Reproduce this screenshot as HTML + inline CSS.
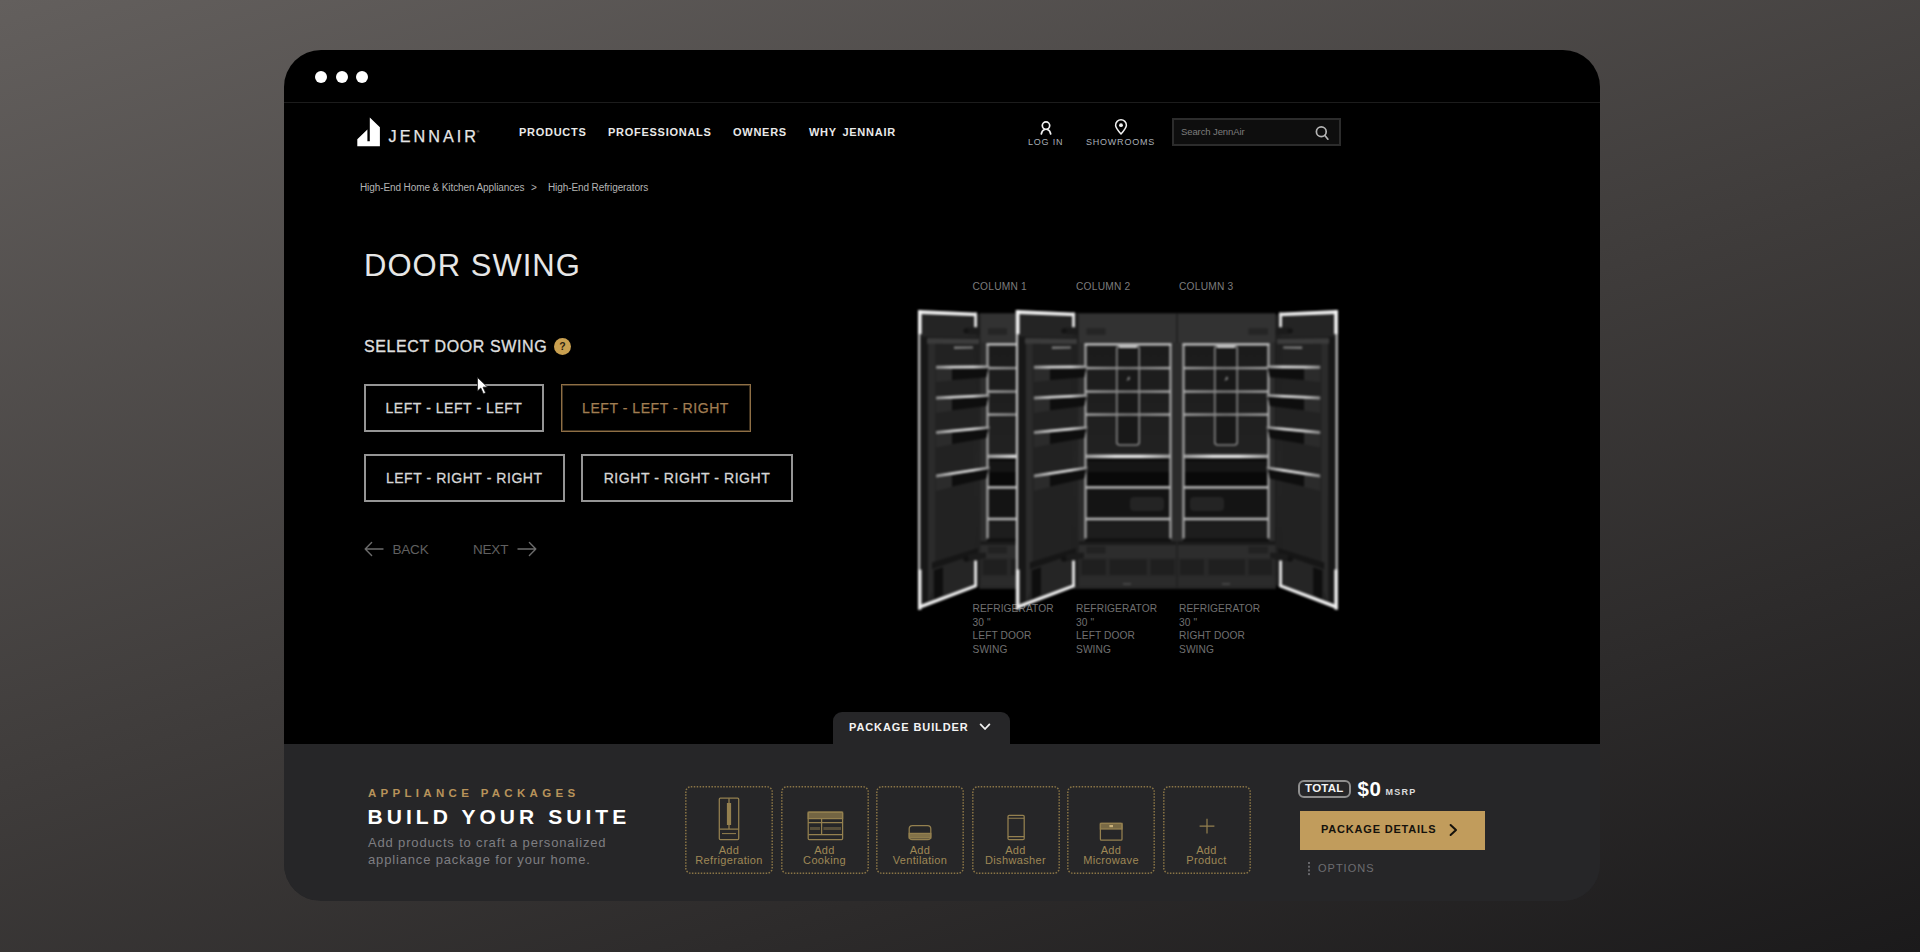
<!DOCTYPE html>
<html lang="en">
<head>
<meta charset="utf-8">
<title>JennAir - Door Swing</title>
<style>
*{margin:0;padding:0;box-sizing:border-box}
html,body{width:1920px;height:952px;overflow:hidden}
body{position:relative;font-family:"Liberation Sans",sans-serif;background:linear-gradient(162deg,#635f5d 0%,#3f3c3b 50%,#1b1a1b 100%);color:#fff}
.abs{position:absolute;white-space:nowrap;line-height:1}
#win{position:absolute;left:284px;top:50px;width:1316px;height:850.5px;background:linear-gradient(#000 0,#000 694px,#262628 694px);border-radius:37px;overflow:hidden}
#win .in{position:absolute;left:-284px;top:-50px;width:1920px;height:952px}
.dot{position:absolute;top:70.7px;width:12px;height:12px;border-radius:50%;background:#fff}
#topline{position:absolute;left:284px;top:102px;width:1316px;height:1px;background:#1c1c1c}
.nav{font-weight:700;font-size:11px;letter-spacing:.73px;word-spacing:2px;color:#e9e9e9;top:127px}
.util{font-size:9px;color:#a9afb7;letter-spacing:.78px;top:138px}
.crumb{font-size:10px;color:#b4b4b4;top:182.5px;letter-spacing:-.1px}
#search{position:absolute;left:1172px;top:118px;width:169px;height:28px;border:2px solid #2c2c2c;background:#0e0e0e}
h1.abs{font-weight:400;font-size:31px;letter-spacing:1.02px;color:#e6e6e6;left:364px;top:250.2px}
.sel{font-size:16px;letter-spacing:.6px;color:#dedede;left:364px;top:339px;-webkit-text-stroke:.35px #dedede}
.btn{position:absolute;height:48px;border:2px solid #959595;color:#d6d6d6;-webkit-text-stroke:.3px #d6d6d6;font-size:14px;letter-spacing:.55px;text-align:center;line-height:44px;white-space:nowrap}
.btn.gold{border:1px solid #8f6f45;box-shadow:inset 0 0 0 1px rgba(143,111,69,.45);color:#a07d52;-webkit-text-stroke:.25px #a07d52;line-height:46px}
.step{font-size:13.5px;color:#606060;top:543px;letter-spacing:-.2px}
.col{font-size:10.2px;letter-spacing:.23px;color:#7c7c7c;top:281.5px}
.fl{font-size:10.2px;line-height:13.5px;letter-spacing:.1px;color:#707070;top:602.3px}
#panel{position:absolute;left:284px;top:744px;width:1316px;height:156px;background:#262628}
#tab{position:absolute;left:832.5px;top:711.5px;width:177.5px;height:34px;background:#262628;border-radius:9px 9px 0 0}
.box{position:absolute;top:786px;width:88px;height:88px;border:2px solid transparent}
.box .lb{position:absolute;left:-4px;right:-4px;top:57px;text-align:center;font-size:11px;line-height:10.2px;color:#9f8856;letter-spacing:.35px}
</style>
</head>
<body>
<div id="win"><div class="in">

<!-- title bar -->
<div class="dot" style="left:315.3px"></div>
<div class="dot" style="left:335.8px"></div>
<div class="dot" style="left:356.3px"></div>
<div id="topline"></div>

<!-- logo -->
<svg class="abs" style="left:356px;top:116px" width="26" height="32" viewBox="356 116 26 32">
  <path d="M357.3 146.2 V139.2 L367.4 129.4 V141.2 H369.8 V117.6 L379.9 127.2 V146.2 Z" fill="#fff"/>
</svg>
<div class="abs" id="brand" style="left:388.5px;top:128.2px;font-size:16.2px;letter-spacing:3.05px;color:#e6e6e6;-webkit-text-stroke:.25px #e6e6e6">JENNAIR</div>
<div class="abs" style="left:476.5px;top:129.5px;font-size:4px;color:#bbb">®</div>

<!-- nav -->
<div class="abs nav" style="left:519px">PRODUCTS</div>
<div class="abs nav" style="left:608px">PROFESSIONALS</div>
<div class="abs nav" style="left:733px">OWNERS</div>
<div class="abs nav" style="left:809px">WHY JENNAIR</div>

<div class="abs util" id="login" style="left:1028px">LOG IN</div>
<div class="abs util" id="show" style="left:1086px">SHOWROOMS</div>
<div id="search"></div>
<!-- login icon -->
<svg class="abs" style="left:1037.8px;top:119.6px" width="16" height="16" viewBox="0 0 16 16" fill="none" stroke="#f0f0f0" stroke-width="1.7" stroke-linecap="round">
  <circle cx="8" cy="5.6" r="3.7"/>
  <path d="M3.3 14 C3.8 11.4 5.2 10 6.6 9.5 M12.7 14 C12.2 11.4 10.8 10 9.4 9.5"/>
</svg>
<!-- pin icon -->
<svg class="abs" style="left:1111.6px;top:118.4px" width="18" height="18" viewBox="0 0 18 18" fill="none" stroke="#f0f0f0" stroke-width="1.5" stroke-linejoin="round">
  <path d="M9 16 C5.2 11.6 3.6 9.5 3.6 7.2 A5.4 5.4 0 0 1 14.4 7.2 C14.4 9.5 12.8 11.6 9 16 Z"/>
  <circle cx="9" cy="7.2" r="1.9" fill="#f0f0f0" stroke="none"/>
</svg>
<!-- search icon -->
<svg class="abs" style="left:1313px;top:125px" width="18" height="18" viewBox="0 0 18 18" fill="none" stroke="#b4b4b4" stroke-width="1.7" stroke-linecap="round">
  <circle cx="8.3" cy="6.8" r="4.9"/>
  <path d="M11.9 10.5 L14.9 14.2"/>
</svg>

<div class="abs" id="stext" style="left:1181px;top:127.1px;font-size:9.5px;color:#7d7d7d;letter-spacing:-.1px">Search JennAir</div>

<!-- breadcrumb -->
<div class="abs crumb" id="c1" style="left:360px">High-End Home &amp; Kitchen Appliances</div>
<div class="abs crumb" style="left:531px">&gt;</div>
<div class="abs crumb" id="c2" style="left:548px">High-End Refrigerators</div>

<h1 class="abs" id="h1">DOOR SWING</h1>
<div class="abs sel" id="sel">SELECT DOOR SWING</div>
<div class="abs" style="left:554px;top:337.5px;width:17px;height:17px;border-radius:50%;background:#c9a050;color:#2a2010;font-size:10.5px;font-weight:700;text-align:center;line-height:17px">?</div>


<div class="btn" style="left:364px;top:384px;width:180px">LEFT - LEFT - LEFT</div>
<div class="btn gold" style="left:560.5px;top:384px;width:190px">LEFT - LEFT - RIGHT</div>
<div class="btn" style="left:364px;top:454px;width:200.5px">LEFT - RIGHT - RIGHT</div>
<div class="btn" style="left:581px;top:454px;width:212px">RIGHT - RIGHT - RIGHT</div>

<div class="abs step" id="back" style="left:392.5px">BACK</div>
<div class="abs step" id="next" style="left:473px">NEXT</div>


<svg class="abs" style="left:363px;top:540px" width="22" height="18" viewBox="0 0 22 18" fill="none" stroke="#6c6c6c" stroke-width="1.4" stroke-linecap="round" stroke-linejoin="round"><path d="M20 9 H2.2 M8.6 2.6 L2.2 9 L8.6 15.4"/></svg>
<svg class="abs" style="left:516px;top:540px" width="22" height="18" viewBox="0 0 22 18" fill="none" stroke="#6c6c6c" stroke-width="1.4" stroke-linecap="round" stroke-linejoin="round"><path d="M2 9 H19.8 M13.4 2.6 L19.8 9 L13.4 15.4"/></svg>
<!-- cursor -->
<svg class="abs" style="left:476px;top:376px" width="14" height="20" viewBox="0 0 14 20"><path d="M1.5 1.5 L1.5 15 L4.8 12 L7.4 17.8 L9.6 16.8 L7 11.2 L11.4 11 Z" fill="#fff" stroke="#222" stroke-width=".8" stroke-linejoin="round"/></svg>


<!-- fridge labels -->
<div class="abs col" style="left:972.5px">COLUMN 1</div>
<div class="abs col" style="left:1076px">COLUMN 2</div>
<div class="abs col" style="left:1179px">COLUMN 3</div>
<div class="abs fl" style="left:972.5px">REFRIGERATOR<br>30 "<br>LEFT DOOR<br>SWING</div>
<div class="abs fl" style="left:1076px">REFRIGERATOR<br>30 "<br>LEFT DOOR<br>SWING</div>
<div class="abs fl" style="left:1179px">REFRIGERATOR<br>30 "<br>RIGHT DOOR<br>SWING</div>
<!--FRIDGE-START-->
<svg class="abs" style="left:900px;top:296px;filter:blur(.85px)" width="460" height="330" viewBox="900 296 460 330">
<defs>
<linearGradient id="rail" x1="0" y1="0" x2="0" y2="1"><stop offset="0" stop-color="#e9e9e9"/><stop offset=".55" stop-color="#b9b9b9"/><stop offset="1" stop-color="#6a6a6a"/></linearGradient>
<linearGradient id="railh" x1="0" y1="0" x2="1" y2="0"><stop offset="0" stop-color="#8a8a8a"/><stop offset=".3" stop-color="#e0e0e0"/><stop offset=".7" stop-color="#cfcfcf"/><stop offset="1" stop-color="#8a8a8a"/></linearGradient>
<linearGradient id="shelf" x1="0" y1="0" x2="1" y2="0"><stop offset="0" stop-color="#a8a8a8"/><stop offset=".5" stop-color="#7d7d7d"/><stop offset="1" stop-color="#a8a8a8"/></linearGradient>
<linearGradient id="bshelf" x1="0" y1="0" x2="1" y2="0"><stop offset="0" stop-color="#9a9a9a"/><stop offset=".35" stop-color="#e6e6e6"/><stop offset=".65" stop-color="#e6e6e6"/><stop offset="1" stop-color="#9a9a9a"/></linearGradient>
<linearGradient id="upper" x1="0" y1="0" x2="0" y2="1"><stop offset="0" stop-color="#1b1b1b"/><stop offset="1" stop-color="#222"/></linearGradient>
<linearGradient id="doorg" x1="0" y1="0" x2="0" y2="1"><stop offset="0" stop-color="#1f1f1f"/><stop offset=".5" stop-color="#242424"/><stop offset="1" stop-color="#1f1f1f"/></linearGradient>
</defs>
<rect x="979.5" y="313.5" width="296.0" height="275" fill="#2c2c2c"/>
<rect x="979.5" y="313.5" width="296.0" height="29" fill="#323232"/>
<rect x="979.5" y="541" width="296.0" height="47.5" fill="#292929"/>
<rect x="979.5" y="541" width="296.0" height="4" fill="#1b1b1b"/>
<rect x="979.5" y="545" width="296.0" height="13" fill="#2d2d2d"/>
<rect x="983" y="559.5" width="24" height="15.5" fill="#1f1f1f"/>
<rect x="1011" y="559.5" width="37" height="15.5" fill="#1f1f1f"/>
<rect x="1052" y="559.5" width="22" height="15.5" fill="#1f1f1f"/>
<rect x="1081.6" y="559.5" width="24.100000000000136" height="15.5" fill="#1f1f1f"/>
<rect x="1109.6" y="559.5" width="37.200000000000045" height="15.5" fill="#1f1f1f"/>
<rect x="1150.5" y="559.5" width="24.0" height="15.5" fill="#1f1f1f"/>
<rect x="1180" y="559.5" width="24" height="15.5" fill="#1f1f1f"/>
<rect x="1208.5" y="559.5" width="36.5" height="15.5" fill="#1f1f1f"/>
<rect x="1248.5" y="559.5" width="23.5" height="15.5" fill="#1f1f1f"/>
<rect x="979.5" y="577" width="296.0" height="11.5" fill="#2b2b2b"/>
<rect x="979.5" y="586" width="296.0" height="2.5" fill="#262626"/>
<rect x="1026" y="583" width="8" height="2" fill="#444"/>
<rect x="1123" y="583" width="8" height="2" fill="#444"/>
<rect x="1222" y="583" width="8" height="2" fill="#444"/>
<rect x="1077" y="313.5" width="2" height="275" fill="#222"/>
<rect x="1072.5" y="343" width="11" height="198" fill="#2b2b2b"/>
<rect x="1176" y="313.5" width="2" height="275" fill="#222"/>
<rect x="1171.5" y="343" width="11" height="198" fill="#2b2b2b"/>
<rect x="986.5" y="343.5" width="87" height="197" fill="#151515"/>
<rect x="988.5" y="345" width="83" height="110" fill="url(#upper)"/>
<rect x="988.5" y="458" width="83" height="29" fill="#090909"/>
<rect x="988.5" y="461" width="83" height="11" fill="#151515"/>
<rect x="988.5" y="489" width="83" height="31" fill="#141414"/>
<rect x="1032.0" y="497" width="34" height="14" rx="4" fill="#242424"/>
<rect x="988.5" y="522" width="83" height="18" fill="#1d1d1d"/>
<rect x="1018.8" y="346" width="22.4" height="99" rx="3" fill="#181818" stroke="#858585" stroke-width="1.6"/>
<rect x="1021.0" y="346" width="18" height="2" fill="#cfcfcf"/>
<path d="M1028.5 381 l2.5 -5 l1 3 z" fill="#999"/>
<rect x="987.5" y="366.9" width="85" height="2.4" fill="url(#shelf)"/>
<rect x="987.5" y="390.4" width="85" height="2.4" fill="url(#shelf)"/>
<rect x="987.5" y="413.4" width="85" height="2.4" fill="url(#shelf)"/>
<rect x="987.5" y="454.6" width="85" height="3.6" fill="url(#bshelf)"/>
<rect x="987.5" y="486.1" width="85" height="2.6" fill="#b4b4b4"/>
<rect x="987.5" y="517.6999999999999" width="85" height="2.6" fill="#b4b4b4"/>
<path d="M987.5 540.5 V344.5 H1072.5 V540.5" fill="none" stroke="#a9a9a9" stroke-width="2.2"/>
<rect x="986.5" y="343.4" width="87" height="1.8" fill="#c9c9c9"/>
<rect x="986.5" y="538.5" width="87" height="3" fill="#101010"/>
<rect x="1084.5" y="343.5" width="87" height="197" fill="#151515"/>
<rect x="1086.5" y="345" width="83" height="110" fill="url(#upper)"/>
<rect x="1086.5" y="458" width="83" height="29" fill="#090909"/>
<rect x="1086.5" y="461" width="83" height="11" fill="#151515"/>
<rect x="1086.5" y="489" width="83" height="31" fill="#141414"/>
<rect x="1130.0" y="497" width="34" height="14" rx="4" fill="#242424"/>
<rect x="1086.5" y="522" width="83" height="18" fill="#1d1d1d"/>
<rect x="1116.8" y="346" width="22.4" height="99" rx="3" fill="#181818" stroke="#858585" stroke-width="1.6"/>
<rect x="1119.0" y="346" width="18" height="2" fill="#cfcfcf"/>
<path d="M1126.5 381 l2.5 -5 l1 3 z" fill="#999"/>
<rect x="1085.5" y="366.9" width="85" height="2.4" fill="url(#shelf)"/>
<rect x="1085.5" y="390.4" width="85" height="2.4" fill="url(#shelf)"/>
<rect x="1085.5" y="413.4" width="85" height="2.4" fill="url(#shelf)"/>
<rect x="1085.5" y="454.6" width="85" height="3.6" fill="url(#bshelf)"/>
<rect x="1085.5" y="486.1" width="85" height="2.6" fill="#b4b4b4"/>
<rect x="1085.5" y="517.6999999999999" width="85" height="2.6" fill="#b4b4b4"/>
<path d="M1085.5 540.5 V344.5 H1170.5 V540.5" fill="none" stroke="#a9a9a9" stroke-width="2.2"/>
<rect x="1084.5" y="343.4" width="87" height="1.8" fill="#c9c9c9"/>
<rect x="1084.5" y="538.5" width="87" height="3" fill="#101010"/>
<rect x="1182.5" y="343.5" width="87" height="197" fill="#151515"/>
<rect x="1184.5" y="345" width="83" height="110" fill="url(#upper)"/>
<rect x="1184.5" y="458" width="83" height="29" fill="#090909"/>
<rect x="1184.5" y="461" width="83" height="11" fill="#151515"/>
<rect x="1184.5" y="489" width="83" height="31" fill="#141414"/>
<rect x="1190.0" y="497" width="34" height="14" rx="4" fill="#242424"/>
<rect x="1184.5" y="522" width="83" height="18" fill="#1d1d1d"/>
<rect x="1214.8" y="346" width="22.4" height="99" rx="3" fill="#181818" stroke="#858585" stroke-width="1.6"/>
<rect x="1217.0" y="346" width="18" height="2" fill="#cfcfcf"/>
<path d="M1224.5 381 l2.5 -5 l1 3 z" fill="#999"/>
<rect x="1183.5" y="366.9" width="85" height="2.4" fill="url(#shelf)"/>
<rect x="1183.5" y="390.4" width="85" height="2.4" fill="url(#shelf)"/>
<rect x="1183.5" y="413.4" width="85" height="2.4" fill="url(#shelf)"/>
<rect x="1183.5" y="454.6" width="85" height="3.6" fill="url(#bshelf)"/>
<rect x="1183.5" y="486.1" width="85" height="2.6" fill="#b4b4b4"/>
<rect x="1183.5" y="517.6999999999999" width="85" height="2.6" fill="#b4b4b4"/>
<path d="M1183.5 540.5 V344.5 H1268.5 V540.5" fill="none" stroke="#a9a9a9" stroke-width="2.2"/>
<rect x="1182.5" y="343.4" width="87" height="1.8" fill="#c9c9c9"/>
<rect x="1182.5" y="538.5" width="87" height="3" fill="#101010"/>
<rect x="988" y="328.3" width="19" height="6.4" rx="1" fill="#252525"/>
<rect x="1086.5" y="328.3" width="19.0" height="6.4" rx="1" fill="#252525"/>
<rect x="1248.5" y="328.3" width="19.5" height="6.4" rx="1" fill="#252525"/>
<rect x="988" y="546.5" width="19" height="7" rx="1" fill="#222"/>
<rect x="1086.5" y="546.5" width="19.0" height="7" rx="1" fill="#222"/>
<rect x="1248.5" y="546.5" width="19.5" height="7" rx="1" fill="#222"/>
<g transform="translate(976,0) scale(-1,1)">
<polygon points="-4.5,316.0 -1.0,312.7 58.0,310.1 58.0,609.6 -1.0,587.0 -4.5,585.0" fill="url(#doorg)"/>
<polygon points="48.0,336.7 56.0,336.6 56.0,608.9 48.0,605.7" fill="#171717"/>
<polygon points="41.0,339.9 48.0,339.9 48.0,605.7 41.0,580.6" fill="#2b2b2b"/>
<polygon points="2.0,344.0 41.0,344.2 41.0,565.7 2.0,552.0" fill="#222"/>
<polygon points="0.0,316.5 56.0,314.3 56.0,336.6 0.0,337.0" fill="#242424"/>
<polygon points="-3.0,339.0 49.0,338.3 49.0,343.7 -3.0,344.0" fill="#3b3b3b"/>
<polygon points="3.0,346.4 22.0,346.6 22.0,348.9 3.0,348.6" fill="#7c7c7c"/>
<polygon points="-2.0,548.0 44.0,562.4 44.0,569.4 -2.0,554.5" fill="#161616"/>
<polygon points="0.0,554.0 44.0,568.9 44.0,603.1 0.0,586.0" fill="#252525"/>
<polygon points="33.0,567.3 42.0,570.3 42.0,600.2 33.0,594.6" fill="#0e0e0e"/>
<polygon points="-12.5,367.8 24.0,368.0 24.0,380.0 -10.5,377.3" fill="#0e0e0e"/>
<polygon points="24.0,368.0 40.0,368.1 40.0,382.1 24.0,380.5" fill="#2b2b2b"/>
<polygon points="-13.5,365.6 40.0,365.7 40.0,368.7 -13.5,368.2" fill="url(#railh)"/>
<polygon points="-12.5,396.4 24.0,398.2 24.0,410.2 -10.5,405.9" fill="#0e0e0e"/>
<polygon points="24.0,398.2 40.0,399.0 40.0,413.0 24.0,410.7" fill="#2b2b2b"/>
<polygon points="-13.5,394.2 40.0,396.6 40.0,399.6 -13.5,396.8" fill="url(#railh)"/>
<polygon points="-12.5,428.5 24.0,432.0 24.0,444.0 -10.5,438.0" fill="#0e0e0e"/>
<polygon points="24.0,432.0 40.0,433.5 40.0,447.5 24.0,444.5" fill="#2b2b2b"/>
<polygon points="-13.5,426.2 40.0,431.1 40.0,434.1 -13.5,428.8" fill="url(#railh)"/>
<polygon points="-12.5,468.9 24.0,474.5 24.0,486.5 -10.5,478.4" fill="#0e0e0e"/>
<polygon points="24.0,474.5 40.0,476.9 40.0,490.9 24.0,487.0" fill="#2b2b2b"/>
<polygon points="-13.5,466.5 40.0,474.5 40.0,477.5 -13.5,469.1" fill="url(#railh)"/>
<polygon points="-4.0,328.6 8.0,327.6 12.0,330.5 8.0,334.0 -4.0,334.4" fill="#1b1b1b"/>
<circle cx="10" cy="330.8" r="2.6" fill="#141414"/>
<polygon points="-10.0,552.5 6.0,554.0 12.0,558.5 8.0,561.5 -10.0,558.0" fill="#1b1b1b"/>
<circle cx="10" cy="559" r="2.8" fill="#121212"/>
<polygon points="-1.0,312.7 58.0,310.1 58.0,313.9 -1.0,316.2" fill="#efefef"/>
<polygon points="-1.0,587.0 58.0,609.6 58.0,605.7 -1.0,583.8" fill="#f2f2f2"/>
<rect x="55.8" y="310.1" width="2.2" height="299.5" fill="#c4c4c4"/>
<rect x="54.4" y="310.1" width="3.6" height="24" fill="#f4f4f4"/>
<rect x="54.5" y="569.6" width="3.5" height="40" fill="#ededed"/>
<rect x="-1" y="312.7" width="2.8" height="14.5" fill="#e6e6e6"/>
<rect x="-1" y="560.5" width="2.8" height="26.5" fill="#e9e9e9"/>
</g>
<g transform="translate(1073.9,0) scale(-1,1)">
<polygon points="-4.5,316.0 -1.0,312.7 58.0,310.1 58.0,609.6 -1.0,587.0 -4.5,585.0" fill="url(#doorg)"/>
<polygon points="48.0,336.7 56.0,336.6 56.0,608.9 48.0,605.7" fill="#171717"/>
<polygon points="41.0,339.9 48.0,339.9 48.0,605.7 41.0,580.6" fill="#2b2b2b"/>
<polygon points="2.0,344.0 41.0,344.2 41.0,565.7 2.0,552.0" fill="#222"/>
<polygon points="0.0,316.5 56.0,314.3 56.0,336.6 0.0,337.0" fill="#242424"/>
<polygon points="-3.0,339.0 49.0,338.3 49.0,343.7 -3.0,344.0" fill="#3b3b3b"/>
<polygon points="3.0,346.4 22.0,346.6 22.0,348.9 3.0,348.6" fill="#7c7c7c"/>
<polygon points="-2.0,548.0 44.0,562.4 44.0,569.4 -2.0,554.5" fill="#161616"/>
<polygon points="0.0,554.0 44.0,568.9 44.0,603.1 0.0,586.0" fill="#252525"/>
<polygon points="33.0,567.3 42.0,570.3 42.0,600.2 33.0,594.6" fill="#0e0e0e"/>
<polygon points="-12.5,367.8 24.0,368.0 24.0,380.0 -10.5,377.3" fill="#0e0e0e"/>
<polygon points="24.0,368.0 40.0,368.1 40.0,382.1 24.0,380.5" fill="#2b2b2b"/>
<polygon points="-13.5,365.6 40.0,365.7 40.0,368.7 -13.5,368.2" fill="url(#railh)"/>
<polygon points="-12.5,396.4 24.0,398.2 24.0,410.2 -10.5,405.9" fill="#0e0e0e"/>
<polygon points="24.0,398.2 40.0,399.0 40.0,413.0 24.0,410.7" fill="#2b2b2b"/>
<polygon points="-13.5,394.2 40.0,396.6 40.0,399.6 -13.5,396.8" fill="url(#railh)"/>
<polygon points="-12.5,428.5 24.0,432.0 24.0,444.0 -10.5,438.0" fill="#0e0e0e"/>
<polygon points="24.0,432.0 40.0,433.5 40.0,447.5 24.0,444.5" fill="#2b2b2b"/>
<polygon points="-13.5,426.2 40.0,431.1 40.0,434.1 -13.5,428.8" fill="url(#railh)"/>
<polygon points="-12.5,468.9 24.0,474.5 24.0,486.5 -10.5,478.4" fill="#0e0e0e"/>
<polygon points="24.0,474.5 40.0,476.9 40.0,490.9 24.0,487.0" fill="#2b2b2b"/>
<polygon points="-13.5,466.5 40.0,474.5 40.0,477.5 -13.5,469.1" fill="url(#railh)"/>
<polygon points="-4.0,328.6 8.0,327.6 12.0,330.5 8.0,334.0 -4.0,334.4" fill="#1b1b1b"/>
<circle cx="10" cy="330.8" r="2.6" fill="#141414"/>
<polygon points="-10.0,552.5 6.0,554.0 12.0,558.5 8.0,561.5 -10.0,558.0" fill="#1b1b1b"/>
<circle cx="10" cy="559" r="2.8" fill="#121212"/>
<polygon points="-1.0,312.7 58.0,310.1 58.0,313.9 -1.0,316.2" fill="#efefef"/>
<polygon points="-1.0,587.0 58.0,609.6 58.0,605.7 -1.0,583.8" fill="#f2f2f2"/>
<rect x="55.8" y="310.1" width="2.2" height="299.5" fill="#c4c4c4"/>
<rect x="54.4" y="310.1" width="3.6" height="24" fill="#f4f4f4"/>
<rect x="54.5" y="569.6" width="3.5" height="40" fill="#ededed"/>
<rect x="-1" y="312.7" width="2.8" height="14.5" fill="#e6e6e6"/>
<rect x="-1" y="560.5" width="2.8" height="26.5" fill="#e9e9e9"/>
</g>
<g transform="translate(1280.2,0) scale(1,1)">
<polygon points="-4.5,316.0 -1.0,312.7 57.6,310.1 57.6,609.5 -1.0,587.0 -4.5,585.0" fill="url(#doorg)"/>
<polygon points="48.0,336.7 56.0,336.6 56.0,608.9 48.0,605.7" fill="#171717"/>
<polygon points="41.0,339.9 48.0,339.9 48.0,605.7 41.0,580.6" fill="#2b2b2b"/>
<polygon points="2.0,344.0 41.0,344.2 41.0,565.7 2.0,552.0" fill="#222"/>
<polygon points="0.0,316.5 56.0,314.3 56.0,336.6 0.0,337.0" fill="#242424"/>
<polygon points="-3.0,339.0 49.0,338.3 49.0,343.7 -3.0,344.0" fill="#3b3b3b"/>
<polygon points="3.0,346.4 22.0,346.6 22.0,348.9 3.0,348.6" fill="#7c7c7c"/>
<polygon points="-2.0,548.0 44.0,562.4 44.0,569.4 -2.0,554.5" fill="#161616"/>
<polygon points="0.0,554.0 44.0,568.9 44.0,603.1 0.0,586.0" fill="#252525"/>
<polygon points="33.0,567.3 42.0,570.3 42.0,600.2 33.0,594.6" fill="#0e0e0e"/>
<polygon points="-12.5,367.8 24.0,368.0 24.0,380.0 -10.5,377.3" fill="#0e0e0e"/>
<polygon points="24.0,368.0 40.0,368.1 40.0,382.1 24.0,380.5" fill="#2b2b2b"/>
<polygon points="-13.5,365.6 40.0,365.7 40.0,368.7 -13.5,368.2" fill="url(#railh)"/>
<polygon points="-12.5,396.4 24.0,398.2 24.0,410.2 -10.5,405.9" fill="#0e0e0e"/>
<polygon points="24.0,398.2 40.0,399.0 40.0,413.0 24.0,410.7" fill="#2b2b2b"/>
<polygon points="-13.5,394.2 40.0,396.6 40.0,399.6 -13.5,396.8" fill="url(#railh)"/>
<polygon points="-12.5,428.5 24.0,432.0 24.0,444.0 -10.5,438.0" fill="#0e0e0e"/>
<polygon points="24.0,432.0 40.0,433.5 40.0,447.5 24.0,444.5" fill="#2b2b2b"/>
<polygon points="-13.5,426.2 40.0,431.1 40.0,434.1 -13.5,428.8" fill="url(#railh)"/>
<polygon points="-12.5,468.9 24.0,474.5 24.0,486.5 -10.5,478.4" fill="#0e0e0e"/>
<polygon points="24.0,474.5 40.0,476.9 40.0,490.9 24.0,487.0" fill="#2b2b2b"/>
<polygon points="-13.5,466.5 40.0,474.5 40.0,477.5 -13.5,469.1" fill="url(#railh)"/>
<polygon points="-4.0,328.6 8.0,327.6 12.0,330.5 8.0,334.0 -4.0,334.4" fill="#1b1b1b"/>
<circle cx="10" cy="330.8" r="2.6" fill="#141414"/>
<polygon points="-10.0,552.5 6.0,554.0 12.0,558.5 8.0,561.5 -10.0,558.0" fill="#1b1b1b"/>
<circle cx="10" cy="559" r="2.8" fill="#121212"/>
<polygon points="-1.0,312.7 57.6,310.1 57.6,313.9 -1.0,316.2" fill="#efefef"/>
<polygon points="-1.0,587.0 57.6,609.5 57.6,605.6 -1.0,583.8" fill="#f2f2f2"/>
<rect x="55.4" y="310.1" width="2.2" height="299.4" fill="#c4c4c4"/>
<rect x="54.0" y="310.1" width="3.6" height="24" fill="#f4f4f4"/>
<rect x="54.1" y="569.5" width="3.5" height="40" fill="#ededed"/>
<rect x="-1" y="312.7" width="2.8" height="14.5" fill="#e6e6e6"/>
<rect x="-1" y="560.5" width="2.8" height="26.5" fill="#e9e9e9"/>
</g>
</svg>
<!--FRIDGE-END-->

<!-- bottom panel -->
<div id="tab"></div>
<div id="panel"></div>
<div class="abs" id="pb" style="left:849px;top:722px;font-size:11px;font-weight:700;letter-spacing:.9px;color:#f4f4f4">PACKAGE BUILDER</div>
<svg class="abs" style="left:978px;top:721px" width="14" height="12" viewBox="0 0 14 12" fill="none" stroke="#f0f0f0" stroke-width="1.8" stroke-linecap="round" stroke-linejoin="round"><path d="M2.6 3.4 L7 8 L11.4 3.4"/></svg>

<div class="abs" id="ap" style="left:368px;top:788px;font-size:11.5px;font-weight:700;letter-spacing:4.3px;color:#b8935a">APPLIANCE PACKAGES</div>
<div class="abs" id="bys" style="left:367.5px;top:806px;font-size:21px;font-weight:700;letter-spacing:4.05px;color:#fff">BUILD YOUR SUITE</div>
<div class="abs" id="d1" style="left:368px;top:835.5px;font-size:13px;letter-spacing:.84px;color:#7e7e82">Add products to craft a personalized</div>
<div class="abs" id="d2" style="left:368px;top:852.5px;font-size:13px;letter-spacing:.84px;color:#7e7e82">appliance package for your home.</div>

<div class="box" style="left:685px"><svg class="abs" style="left:-2px;top:-2px" width="88" height="88" viewBox="0 0 88 88" fill="none"><rect x=".8" y=".8" width="86.4" height="86.4" rx="5" stroke="#8a7546" stroke-width="1.5" stroke-dasharray="1.5 1.45"/></svg><div class="lb">Add<br>Refrigeration</div>
<svg class="abs" style="left:29px;top:7.5px" width="26" height="46" viewBox="0 0 26 46" fill="none" stroke="#94804f" stroke-width="1.25"><rect x="3.3" y="2.2" width="19.4" height="41.4" rx="1"/><path d="M3.3 33 H22.7 M13 2.2 V33"/><rect x="10.9" y="7" width="4.2" height="22" fill="#94804f" stroke="none"/><path d="M6 37.6 H20" stroke-width="1"/></svg></div>

<div class="box" style="left:780.5px"><svg class="abs" style="left:-2px;top:-2px" width="88" height="88" viewBox="0 0 88 88" fill="none"><rect x=".8" y=".8" width="86.4" height="86.4" rx="5" stroke="#8a7546" stroke-width="1.5" stroke-dasharray="1.5 1.45"/></svg><div class="lb">Add<br>Cooking</div>
<svg class="abs" style="left:22.4px;top:21.5px" width="40" height="32" viewBox="0 0 40 32" fill="none" stroke="#94804f" stroke-width="1.25"><rect x="3.2" y="2.2" width="34.4" height="27.4" rx="1"/><rect x="3.2" y="2.2" width="34.4" height="6.4" fill="#94804f" fill-opacity=".7"/><path d="M3.2 12.6 H37.6 M3.2 24.6 H37.6 M16.6 8.6 V24.6"/><path d="M5 18.6 H15 M18.4 18.6 H36" stroke-width="3" stroke-opacity=".45"/></svg></div>

<div class="box" style="left:876px"><svg class="abs" style="left:-2px;top:-2px" width="88" height="88" viewBox="0 0 88 88" fill="none"><rect x=".8" y=".8" width="86.4" height="86.4" rx="5" stroke="#8a7546" stroke-width="1.5" stroke-dasharray="1.5 1.45"/></svg><div class="lb">Add<br>Ventilation</div>
<svg class="abs" style="left:28px;top:35.5px" width="28" height="18" viewBox="0 0 28 18" fill="none" stroke="#94804f" stroke-width="1.25"><rect x="3.2" y="1.6" width="21.6" height="14" rx="3.2"/><rect x="3.2" y="9.4" width="21.6" height="4.6" fill="#94804f" fill-opacity=".85"/></svg></div>

<div class="box" style="left:971.5px"><svg class="abs" style="left:-2px;top:-2px" width="88" height="88" viewBox="0 0 88 88" fill="none"><rect x=".8" y=".8" width="86.4" height="86.4" rx="5" stroke="#8a7546" stroke-width="1.5" stroke-dasharray="1.5 1.45"/></svg><div class="lb">Add<br>Dishwasher</div>
<svg class="abs" style="left:31px;top:25.5px" width="22" height="28" viewBox="0 0 22 28" fill="none" stroke="#94804f" stroke-width="1.25"><rect x="3" y="1.4" width="16.2" height="24.2" rx="1.2"/><path d="M3 4.2 H19.2 M3 22.6 H19.2" stroke-width="1.1"/></svg></div>

<div class="box" style="left:1067px"><svg class="abs" style="left:-2px;top:-2px" width="88" height="88" viewBox="0 0 88 88" fill="none"><rect x=".8" y=".8" width="86.4" height="86.4" rx="5" stroke="#8a7546" stroke-width="1.5" stroke-dasharray="1.5 1.45"/></svg><div class="lb">Add<br>Microwave</div>
<svg class="abs" style="left:28px;top:33.5px" width="28" height="20" viewBox="0 0 28 20" fill="none" stroke="#94804f" stroke-width="1.25"><rect x="3.4" y="1.4" width="21.6" height="16.8" rx="1"/><rect x="3.4" y="1.4" width="21.6" height="5.6" fill="#94804f" fill-opacity=".75"/><rect x="12.4" y="3" width="3.6" height="2.2" fill="#c9b078" stroke="none"/></svg></div>

<div class="box" style="left:1162.5px"><svg class="abs" style="left:-2px;top:-2px" width="88" height="88" viewBox="0 0 88 88" fill="none"><rect x=".8" y=".8" width="86.4" height="86.4" rx="5" stroke="#8a7546" stroke-width="1.5" stroke-dasharray="1.5 1.45"/></svg><div class="lb">Add<br>Product</div>
<svg class="abs" style="left:33.1px;top:29px" width="18" height="18" viewBox="0 0 18 18" fill="none" stroke="#94804f" stroke-width="1.2"><path d="M9 1.8 V16.6 M1.6 9.2 H16.4"/></svg></div>

<div class="abs" id="total" style="left:1298px;top:779.6px;width:52.5px;height:18px;border:2px solid #8e8e8e;border-radius:6px;font-size:11.5px;font-weight:700;letter-spacing:.2px;text-align:center;line-height:13.6px;color:#f4f4f4">TOTAL</div>
<div class="abs" id="price" style="left:1357.5px;top:779px;font-size:20.5px;font-weight:700;letter-spacing:.5px;color:#fff">$0</div>
<div class="abs" id="msrp" style="left:1385.5px;top:787.6px;font-size:9px;font-weight:700;letter-spacing:1.25px;color:#dcdcdc">MSRP</div>

<div class="abs" id="pd" style="left:1299.5px;top:811px;width:185.5px;height:38.5px;background:#c19c5c"></div>
<div class="abs" id="pdt" style="left:1321px;top:824px;font-size:11px;font-weight:700;letter-spacing:.8px;color:#15120c">PACKAGE DETAILS</div>
<svg class="abs" style="left:1446px;top:822px" width="14" height="16" viewBox="0 0 14 16" fill="none" stroke="#15120c" stroke-width="2" stroke-linecap="round" stroke-linejoin="round"><path d="M4.6 3 L10 8 L4.6 13"/></svg>

<div class="abs" style="left:1308px;top:862px;width:2.4px;height:2.4px;background:#66666a;box-shadow:0 3.7px 0 #66666a,0 7.4px 0 #66666a,0 11.1px 0 #66666a"></div>
<div class="abs" id="opt" style="left:1318px;top:862.5px;font-size:11px;letter-spacing:1px;color:#6d6d71">OPTIONS</div>


</div></div>
</body>
</html>
